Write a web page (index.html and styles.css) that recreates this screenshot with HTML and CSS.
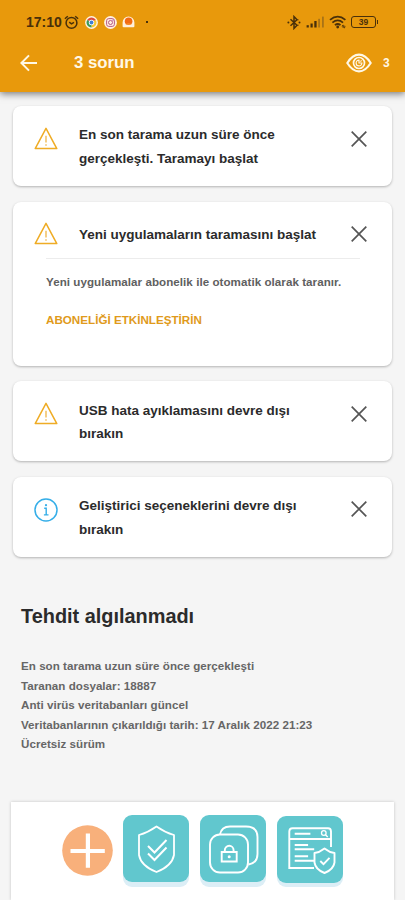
FILE: index.html
```html
<!DOCTYPE html>
<html lang="tr">
<head>
<meta charset="utf-8">
<title>3 sorun</title>
<link rel="stylesheet" href="styles.css">
</head>
<body>
<svg class="defs" width="0" height="0">
  <symbol id="warn" viewBox="0 0 24 24"><path d="M12 1.3 22.8 21.6H1.2Z" fill="none" stroke="#efac25" stroke-width="1.5" stroke-linejoin="round"/><path d="M12 8.7v6.8M12 17.3v1.5" stroke="#efb445" stroke-width="1.3"/></symbol>
  <symbol id="close" viewBox="0 0 16 16"><path d="M.7.7 15.3 15.3M15.3.7.7 15.3" stroke="#555" stroke-width="1.7"/></symbol>
</svg>
<header class="header">
  <div class="status">
    <span class="time">17:10</span>
    <svg class="alarm" width="15" height="15" viewBox="0 0 15 15" fill="none" stroke="#49300a" stroke-width="1.5"><circle cx="7.5" cy="7.9" r="5.4"/><path d="M.9 3.8 3.8 1.2M14.1 3.8 11.2 1.2M5.2 7.2l2.3 1.7 2.5-1.5"/></svg>
    <svg class="chrome" width="13" height="13" viewBox="0 0 13 13"><circle cx="6.5" cy="6.5" r="6.4" fill="#fff3df"/><path d="M6.5 6.5 2.2 4A5 5 0 0 1 10.8 4Z" fill="#dc4b3e"/><path d="M6.5 6.5 10.8 4a5 5 0 0 1-4.3 7.5Z" fill="#f5c832"/><path d="M6.5 6.5v5A5 5 0 0 1 2.2 4Z" fill="#3b9b58"/><circle cx="6.5" cy="6.5" r="2.7" fill="#fff"/><circle cx="6.5" cy="6.5" r="1.9" fill="#3f7fd5"/></svg>
    <svg class="insta" width="13" height="13" viewBox="0 0 13 13"><circle cx="6.5" cy="6.5" r="6.4" fill="#fff0e0"/><g fill="none" stroke="#b85a86" stroke-width="1"><rect x="2.6" y="2.6" width="7.8" height="7.8" rx="2.2"/><circle cx="6.5" cy="6.5" r="2"/></g><circle cx="8.9" cy="4.2" r=".6" fill="#a552a0"/></svg>
    <svg class="app" width="13" height="13" viewBox="0 0 13 13"><path d="M.6 10.3V6.5a5.9 5.9 0 0 1 11.8 0v3.8q0 1-1 1H1.6q-1 0-1-1Z" fill="#fff0dd"/><circle cx="6.6" cy="5.2" r="3.8" fill="#f36b13"/><path d="M3.2 8.6q3.4-2.2 6.8 0Z" fill="#f9a33b"/></svg>
    <span class="dot"></span>
    <span class="fill"></span>
    <svg class="bt" width="14" height="15" viewBox="0 0 14 15"><path d="m3.5 4.3 6.5 6-3 3.1V1.6l3 3.1-6.5 6" fill="none" stroke="#49300a" stroke-width="1.5"/><circle cx="1.4" cy="7.5" r="1" fill="#49300a"/><circle cx="12.5" cy="7.5" r="1" fill="#49300a"/><circle cx="11" cy="4.8" r=".6" fill="#49300a"/><circle cx="11" cy="10.2" r=".6" fill="#49300a"/></svg>
    <svg class="signal" width="19" height="12" viewBox="0 0 19 12"><g fill="#49300a"><rect x=".6" y="9.2" width="2.2" height="2.3"/><rect x="4.5" y="7.5" width="2.2" height="4"/><rect x="8.3" y="5" width="2.3" height="6.5"/></g><g fill="#a97316"><rect x="12.2" y="2.8" width="1.8" height="8.7"/><rect x="16" y=".6" width="1.8" height="10.9"/></g></svg>
    <svg class="wifi" width="18" height="14" viewBox="0 0 18 14"><g fill="none" stroke="#49300a" stroke-width="1.8"><path d="M1 4.9q7.7-6.5 15.4 0M3.4 7.6q5.3-4.4 10.6 0M5.9 10.1q2.8-2.2 5.6 0"/></g><circle cx="8.7" cy="12" r="1.4" fill="#49300a"/><path d="m12.8 11.2 1.4-1.2v1.2h2M16.4 11.9l-1.4 1.2v-1.2h-2" stroke="#49300a" fill="none" stroke-width=".8"/></svg>
    <span class="battery">39</span>
  </div>
  <div class="bar">
    <svg width="18" height="18" viewBox="0 0 18 18" fill="none" stroke="#fff8e6" stroke-width="2"><path d="M17 9H1.6M9 1.4 1.4 9 9 16.6"/></svg>
    <h1>3 sorun</h1>
    <span class="fill"></span>
    <svg width="26" height="20" viewBox="0 0 26 20" fill="none" stroke="#fff8e6"><path d="M1.3 10Q6.5 1.6 13 1.6T24.7 10Q19.5 18.4 13 18.4T1.3 10Z" stroke-width="2.1"/><circle cx="13" cy="10" r="5.5" stroke-width="1.7"/><path d="M13 7.1a2.9 2.9 0 1 0 2.9 2.9H13Z" stroke-width="1.2"/><path d="M14.4 8.6 15.6 7.4" stroke-width="1.3"/></svg>
    <span class="count">3</span>
  </div>
</header>
<main>
  <section class="card">
    <div class="row"><svg class="ic"><use href="#warn"/></svg><h2>En son tarama uzun süre önce<br>gerçekleşti. Taramayı başlat</h2><svg class="x"><use href="#close"/></svg></div>
  </section>
  <section class="card tall">
    <div class="row"><svg class="ic"><use href="#warn"/></svg><h2>Yeni uygulamaların taramasını başlat</h2><svg class="x"><use href="#close"/></svg></div>
    <div class="detail"><p>Yeni uygulamalar abonelik ile otomatik olarak taranır.</p><a>ABONELİĞİ ETKİNLEŞTİRİN</a></div>
  </section>
  <section class="card low-text">
    <div class="row"><svg class="ic"><use href="#warn"/></svg><h2>USB hata ayıklamasını devre dışı<br>bırakın</h2><svg class="x"><use href="#close"/></svg></div>
  </section>
  <section class="card low-text">
    <div class="row"><svg class="ic" viewBox="0 0 24 24" fill="none" stroke="#35aee8"><circle cx="12" cy="12" r="11" stroke-width="1.5"/><path d="M10.2 10.2h2v6.5M9.9 16.9h4.6" stroke-width="1.4"/><circle cx="12" cy="7.2" r="1.1" fill="#35aee8" stroke="none"/></svg><h2>Geliştirici seçeneklerini devre dışı<br>bırakın</h2><svg class="x"><use href="#close"/></svg></div>
  </section>
</main>
<section class="summary">
  <h2>Tehdit algılanmadı</h2>
  <ul>
    <li>En son tarama uzun süre önce gerçekleşti</li>
    <li>Taranan dosyalar: 18887</li>
    <li>Anti virüs veritabanları güncel</li>
    <li>Veritabanlarının çıkarıldığı tarih: 17 Aralık 2022 21:23</li>
    <li>Ücretsiz sürüm</li>
  </ul>
</section>
<nav class="dock">
  <svg class="plus" width="51" height="51" viewBox="0 0 51 51"><circle cx="25.5" cy="25.5" r="25.3" fill="#f8b07b"/><path d="M25.9 8.5v34.3M8.5 26h34.3" stroke="#fff" stroke-width="4.2"/></svg>
  <div class="tile"><svg viewBox="0 0 66 67" fill="none" stroke="#fff"><path d="M33.5 11.5Q42 17.5 51 20v20Q49 51 33.5 57 18 51 16 40V20Q25 17.5 33.5 11.5Z" stroke-width="1.8" stroke-linejoin="round"/><path d="m25 31 6.5 6.5L43.5 25M25 38.5l6.5 6.5 12-12.5" stroke-width="2"/></svg></div>
  <div class="tile"><svg viewBox="0 0 66 67" fill="none" stroke="#fff" stroke-width="1.9"><rect x="10" y="19.5" width="38" height="38" rx="10"/><path d="M20 19.5Q21.5 11.5 30 11.5H46Q57.5 11.5 57.5 22V39Q57.5 48 48.5 49.5"/><path d="M21.7 37h15v9.5h-15ZM24.8 37v-1.8a4.4 4.4 0 0 1 8.8 0V37"/><circle cx="29.2" cy="41.7" r="1.5" fill="#fff" stroke="none"/></svg></div>
  <div class="tile low"><svg viewBox="0 0 66 67" fill="none" stroke="#fff" stroke-width="1.9"><path d="M37 52H12.3V15.5Q12.3 12.2 15.6 12.2H51Q54 12.2 54 15.5V31M12.3 23H54"/><path d="M17.7 17.8h15.7M17.7 29h13.4M17.7 33.3h19.5M17.7 40.2h13.4M17.7 44.7h19.5"/><circle cx="46.8" cy="17" r="2.3" stroke-width="1.3"/><path d="m48.5 18.7 2.2 2.2" stroke-width="1.4"/><path d="M47.5 32.5Q52.5 36.5 57.5 37v9.5Q56.5 53.5 47.5 57 38.5 53.5 37.5 46.5V37Q42.5 36.5 47.5 32.5Z" stroke-linejoin="round"/><path d="m43.3 45 3.2 3.2 6-6.3"/></svg></div>
</nav>
</body>
</html>
```
FILE: styles.css
```css
* { box-sizing: border-box; margin: 0; padding: 0; }
body { width: 405px; height: 900px; overflow: hidden; display: flex; flex-direction: column; background: #f5f5f5; font-family: "Liberation Sans", Arial, sans-serif; font-weight: bold; color: #2b2b2b; }
svg { display: block; flex: none; }
.defs { position: absolute; }
.fill { flex: 1; }
.header { flex: none; height: 92px; background: #e8990c; box-shadow: 0 2px 7px rgba(0, 0, 0, .5); }
.status { height: 44px; padding: 0 29px 0 26px; display: flex; align-items: center; color: #49300a; }
.time { width: 38px; font-size: 14px; }
.alarm { margin-right: 6px; }
.chrome { margin-right: 5.5px; }
.insta { margin-right: 5.5px; }
.dot { width: 2px; height: 2px; margin-left: 11px; background: #49300a; }
.bt { margin-right: 5px; }
.signal { margin-right: 4px; }
.wifi { margin-right: 4px; }
.battery { position: relative; width: 25px; height: 12px; border: 1.5px solid #49300a; border-radius: 3px; font-size: 8.5px; line-height: 10px; text-align: center; }
.battery::after { content: ""; position: absolute; right: -3px; top: 3px; width: 1.5px; height: 4px; background: #49300a; }
.bar { height: 38px; padding: 0 15px 0 20px; display: flex; align-items: center; color: #fff8e6; }
.bar h1 { margin-left: 36px; font-size: 16.8px; line-height: 20px; }
.count { width: 7px; margin-left: 11px; font-size: 12px; }
main { padding: 14px 13px 0; display: flex; flex-direction: column; gap: 15.5px; }
.card { height: 80px; background: #fff; border-radius: 8px; box-shadow: 0 1px 2.5px rgba(0, 0, 0, .27); }
.card.tall { height: 164px; }
.row { display: flex; align-items: flex-start; padding: 17px 25px 0 21px; }
.row h2 { flex: 1; font-size: 13.5px; line-height: 23.7px; white-space: nowrap; }
.low-text h2 { margin-top: .6px; }
.ic { width: 24px; height: 24px; margin: 4px 21px 0 0; }
.x { width: 16px; height: 16px; margin-top: 7.5px; }
.tall .ic { margin-top: 3px; }
.tall .x { margin-top: 7px; }
.tall .row h2 { margin-top: 4px; }
.detail { margin: 11.5px 32px 0 33px; border-top: 1px solid #ececec; color: #606060; }
.detail p { margin-top: 15.5px; font-size: 11.6px; letter-spacing: .05px; line-height: 16px; white-space: nowrap; }
.detail a { display: block; margin-top: 21.5px; font-size: 11.65px; line-height: 16px; color: #e09a1b; }
.summary { height: 245px; padding: 46px 21px 0; }
.summary h2 { font-size: 19.9px; line-height: 26px; }
.summary ul { margin-top: 27.5px; list-style: none; color: #666; }
.summary li { font-size: 11.6px; letter-spacing: .03px; line-height: 19.5px; white-space: nowrap; }
.dock { flex: none; height: 98px; margin: 0 11px; padding: 13px 0 0 51px; display: flex; align-items: flex-start; background: #fff; box-shadow: 0 0 3px rgba(0, 0, 0, .2); }
.plus { margin: 10px 10px 0 0; }
.tile { width: 66px; height: 67px; margin-right: 11px; border-radius: 9px; background: #61c7ce; box-shadow: 0 5px 0 #dceef6; }
.tile svg { width: 66px; height: 67px; }
.tile.low { margin-top: 1px; box-shadow: 0 4px 0 #dceef6; }
```
